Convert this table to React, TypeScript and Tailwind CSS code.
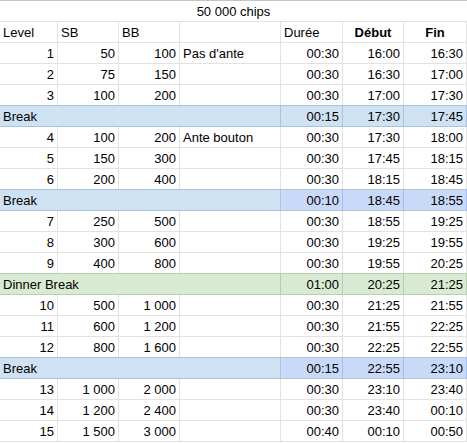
import React from "react";

type Kind = "normal" | "break" | "breakDark" | "dinner" | "header";
type Row = { kind: Kind; cells: string[] };

const W = [
  "w-[58px]",
  "w-[61px]",
  "w-[61px]",
  "w-[101px]",
  "w-[62px]",
  "w-[61px]",
  "w-[63px]",
];

const rows: Row[] = [
  { kind: "header", cells: ["Level", "SB", "BB", "", "Durée", "Début", "Fin"] },
  { kind: "normal", cells: ["1", "50", "100", "Pas d'ante", "00:30", "16:00", "16:30"] },
  { kind: "normal", cells: ["2", "75", "150", "", "00:30", "16:30", "17:00"] },
  { kind: "normal", cells: ["3", "100", "200", "", "00:30", "17:00", "17:30"] },
  { kind: "break", cells: ["Break", "00:15", "17:30", "17:45"] },
  { kind: "normal", cells: ["4", "100", "200", "Ante bouton", "00:30", "17:30", "18:00"] },
  { kind: "normal", cells: ["5", "150", "300", "", "00:30", "17:45", "18:15"] },
  { kind: "normal", cells: ["6", "200", "400", "", "00:30", "18:15", "18:45"] },
  { kind: "breakDark", cells: ["Break", "00:10", "18:45", "18:55"] },
  { kind: "normal", cells: ["7", "250", "500", "", "00:30", "18:55", "19:25"] },
  { kind: "normal", cells: ["8", "300", "600", "", "00:30", "19:25", "19:55"] },
  { kind: "normal", cells: ["9", "400", "800", "", "00:30", "19:55", "20:25"] },
  { kind: "dinner", cells: ["Dinner Break", "01:00", "20:25", "21:25"] },
  { kind: "normal", cells: ["10", "500", "1\u00a0000", "", "00:30", "21:25", "21:55"] },
  { kind: "normal", cells: ["11", "600", "1\u00a0200", "", "00:30", "21:55", "22:25"] },
  { kind: "normal", cells: ["12", "800", "1\u00a0600", "", "00:30", "22:25", "22:55"] },
  { kind: "breakDark", cells: ["Break", "00:15", "22:55", "23:10"] },
  { kind: "normal", cells: ["13", "1\u00a0000", "2\u00a0000", "", "00:30", "23:10", "23:40"] },
  { kind: "normal", cells: ["14", "1\u00a0200", "2\u00a0400", "", "00:30", "23:40", "00:10"] },
  { kind: "normal", cells: ["15", "1\u00a0500", "3\u00a0000", "", "00:40", "00:10", "00:50"] },
];

const txt = "h-full shrink-0 overflow-hidden whitespace-nowrap leading-[22px] px-[3px] border-r";

function bottomColor(kind: Kind, next?: Kind) {
  if (kind === "dinner" || next === "dinner") return "border-b-[#b7cfb0]";
  if (kind === "break" || kind === "breakDark" || next === "break" || next === "breakDark")
    return "border-b-[#adc3dc]";
  return "border-b-[#e2e2e2]";
}

function NormalRow({ row, next }: { row: Row; next?: Kind }) {
  const isHeader = row.kind === "header";
  return (
    <div className={`flex h-[21px] border-b ${bottomColor(row.kind, next)}`}>
      {row.cells.map((c, i) => {
        let align = "text-right";
        let weight = "";
        if (isHeader) {
          align = i === 5 || i === 6 ? "text-center" : "text-left";
          weight = i === 5 || i === 6 ? "font-bold" : "";
        } else if (i === 3) {
          align = "text-left";
        }
        return (
          <div key={i} className={`${W[i]} ${txt} border-r-[#e2e2e2] ${align} ${weight}`}>
            {c}
          </div>
        );
      })}
    </div>
  );
}

function BreakRow({ row, next }: { row: Row; next?: Kind }) {
  const isDinner = row.kind === "dinner";
  const bg = isDinner ? "bg-[#d9ead3]" : "bg-[#cfe2f3]";
  const line = isDinner ? "border-r-[#b7cfb0]" : "border-r-[#adc3dc]";
  const rightBg =
    row.kind === "breakDark" ? "bg-[#c9daf8]" : bg;
  const rightLine = row.kind === "breakDark" ? "border-r-[#a8bde3]" : line;
  return (
    <div className={`flex h-[21px] border-b ${bottomColor(row.kind, next)} ${bg}`}>
      <div className={`w-[281px] ${txt} ${line} text-left`}>{row.cells[0]}</div>
      {row.cells.slice(1).map((c, j) => (
        <div key={j} className={`${W[j + 4]} ${txt} ${rightLine} ${rightBg} text-right`}>
          {c}
        </div>
      ))}
    </div>
  );
}

export default function App() {
  return (
    <div
      className="w-[467px] h-[443px] overflow-hidden bg-white text-[13px] text-black"
      style={{ fontFamily: '"Liberation Sans", Arial, sans-serif' }}
    >
      <div className="border-t border-t-[#c4c4c4]">
        <div className="flex h-[21px] border-b border-b-[#e2e2e2]">
          <div className="w-[467px] h-full overflow-hidden whitespace-nowrap leading-[22px] text-center">
            50 000 chips
          </div>
        </div>
        {rows.map((r, idx) => {
          const next = rows[idx + 1]?.kind;
          return r.kind === "normal" || r.kind === "header" ? (
            <NormalRow key={idx} row={r} next={next} />
          ) : (
            <BreakRow key={idx} row={r} next={next} />
          );
        })}
      </div>
    </div>
  );
}
